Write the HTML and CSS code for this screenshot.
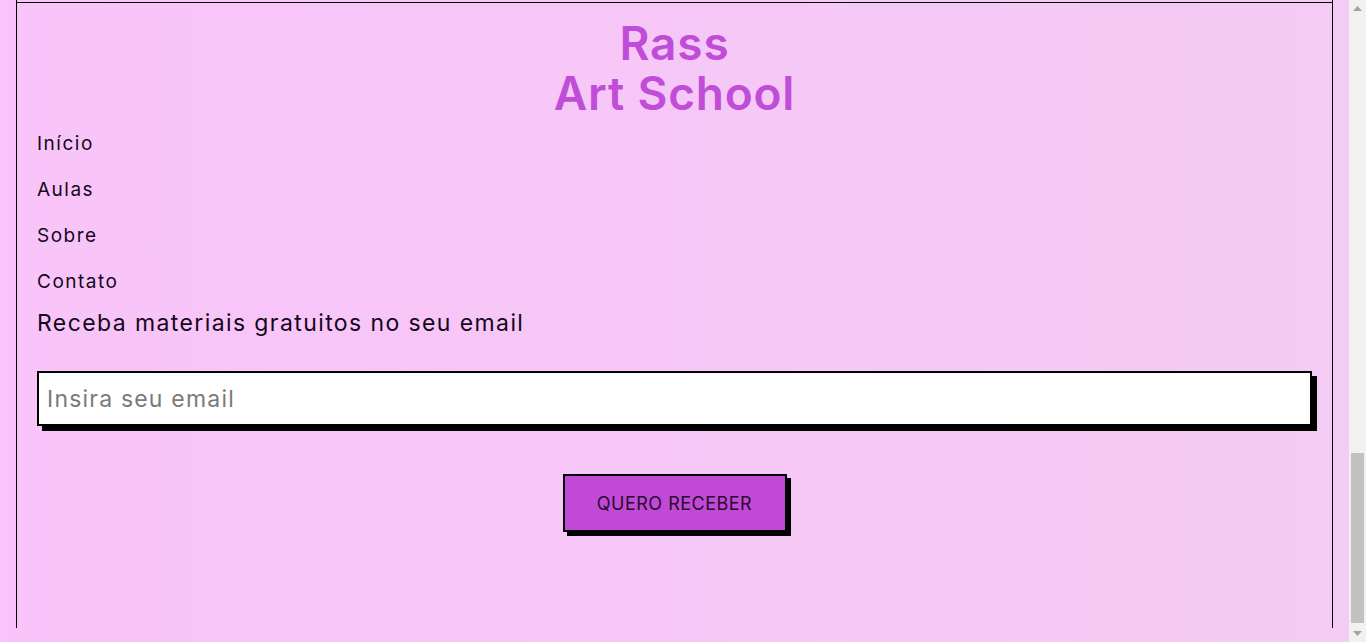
FILE: index.html
```html
<!DOCTYPE html>
<html lang="pt-BR">
<head>
<meta charset="utf-8">
<title>Rass Art School</title>
<link rel="stylesheet" href="styles.css">
</head>
<body>
<div class="viewport">
  <div class="page">
    <footer class="footer">
      <h2 class="brand">Rass<br>Art School</h2>
      <nav class="menu">
        <a href="#" class="menu-link">Início</a>
        <a href="#" class="menu-link">Aulas</a>
        <a href="#" class="menu-link">Sobre</a>
        <a href="#" class="menu-link">Contato</a>
      </nav>
      <form class="newsletter">
        <p class="newsletter-title">Receba materiais gratuitos no seu email</p>
        <input class="newsletter-input" type="email" placeholder="Insira seu email">
        <button class="newsletter-button" type="button">QUERO RECEBER</button>
      </form>
    </footer>
  </div>
  <div class="scrollbar" aria-hidden="true">
    <div class="scroll-arrow"><svg width="9" height="5" viewBox="0 0 9 5"><path d="M0 5 L4.5 0 L9 5 Z" fill="#a3a3a3"/></svg></div>
    <div class="scroll-track"><div class="scroll-thumb"></div></div>
    <div class="scroll-arrow"><svg width="9" height="5" viewBox="0 0 9 5"><path d="M0 0 L4.5 5 L9 0 Z" fill="#a3a3a3"/></svg></div>
  </div>
</div>
</body>
</html>
```
FILE: styles.css
```css
html, body {
  margin: 0;
  height: 100%;
  overflow: hidden;
}
body {
  font-family: Inter, "Noto Sans", sans-serif;
  color: #14081a;
}
.viewport {
  display: flex;
  height: 642px;
}
.page {
  flex: 1;
  background: linear-gradient(90deg, #f9c4f9 0%, #f3cbf4 100%);
}
.footer {
  margin: 0 16px;
  padding: 2px 0 0;
  height: 628px;
  border-left: 1px solid #000;
  border-right: 1px solid #000;
  box-sizing: border-box;
}
.footer > * {
  margin-left: 20px;
  margin-right: 20px;
}
.footer::before {
  content: "";
  display: block;
  border-top: 1px solid #000;
}
.brand {
  margin-top: 15px;
  margin-bottom: 0;
  text-align: center;
  font-size: 46px;
  line-height: 50px;
  font-weight: 600;
  color: #c04dd8;
  letter-spacing: 0.8px;
}
.menu {
  display: flex;
  flex-direction: column;
  margin-top: 3px;
}
.menu-link {
  display: block;
  line-height: 46px;
  font-size: 19px;
  letter-spacing: 1.5px;
  color: #14081a;
  text-decoration: none;
}
.newsletter {
  display: flex;
  flex-direction: column;
  align-items: center;
}
.newsletter-title {
  align-self: stretch;
  margin: 0;
  line-height: 36px;
  font-size: 23px;
  letter-spacing: 1.4px;
}
.newsletter-input {
  align-self: stretch;
  margin-top: 30px;
  height: 55px;
  box-sizing: border-box;
  border: 2px solid #000;
  box-shadow: 5px 5px 0 #000;
  background: #fff;
  padding: 0 8px;
  font-family: inherit;
  font-size: 23px;
  letter-spacing: 1.2px;
  color: #14081a;
  outline: none;
}
.newsletter-input::placeholder {
  color: #7a7a7a;
}
.newsletter-button {
  margin-top: 48px;
  width: 224px;
  height: 58px;
  border: 2px solid #000;
  box-shadow: 4px 4px 0 #000;
  background: #c04ad6;
  font-family: inherit;
  font-size: 18px;
  letter-spacing: 0.5px;
  color: #2a0a30;
  cursor: pointer;
}
.scrollbar {
  width: 17px;
  flex: none;
  display: flex;
  flex-direction: column;
  background: #f1f1f1;
}
.scroll-arrow {
  height: 17px;
  display: flex;
  align-items: center;
  justify-content: center;
}
.scroll-track {
  flex: 1;
  display: flex;
  flex-direction: column;
  justify-content: flex-end;
  padding: 0 2px 2px;
}
.scroll-thumb {
  height: 170px;
  background: #c1c1c1;
}
```
